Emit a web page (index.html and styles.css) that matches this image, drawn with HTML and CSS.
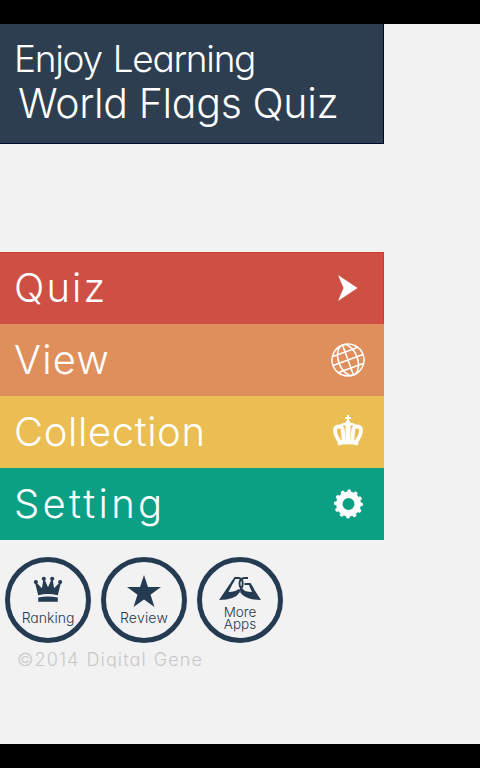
FILE: index.html
```html
<!DOCTYPE html>
<html lang="en">
<head>
<meta charset="utf-8">
<title>World Flags Quiz</title>
<link rel="stylesheet" href="styles.css">
</head>
<body>
<main class="screen">
  <header class="title">
    <div class="line line-one"><span>Enjoy</span><span class="learning">Learning</span></div>
    <div class="line line-two"><span class="world">World</span><span class="flags">Flags</span><span class="quizword">Quiz</span></div>
  </header>
  <nav class="menu">
    <a class="row red"><span class="t-quiz">Quiz</span>
      <svg class="icon" viewBox="0 0 36 36"><path fill="#fff" d="M8 5 27.500 18 8 31l5.500-13z"/></svg></a>
    <a class="row orange"><span class="t-view">View</span>
      <svg class="icon" viewBox="0 0 36 36"><g fill="none" stroke="#fff" stroke-width="1.500" transform="rotate(-20 18 18)"><circle cx="18" cy="18" r="16"/><ellipse cx="18" cy="18" rx="9.500" ry="16"/><path d="M18 2v32M2 18h32M5 9.500h26M5 26.500h26"/></g></svg></a>
    <a class="row yellow"><span class="t-coll">Collection</span>
      <svg class="icon" viewBox="0 0 36 36"><g fill="#fff"><path d="M17 1h2v2h2v2h-2v3h-2V5h-2V3h2z"/><circle cx="18" cy="8.500" r="2.200"/><path d="M8 31.500Q18 29 28 31.500L28.500 27Q18 24 7.500 27z"/></g><g fill="none" stroke="#fff"><path stroke-width="3.800" d="M9.500 27.500C6.500 23 5 20 5 16.500c0-5 6-5.500 7.500-1.500.8 3 .5 8 1.500 12M26.500 27.500C29.500 23 31 20 31 16.500c0-5-6-5.500-7.500-1.500-.8 3-.5 8-1.500 12"/><path stroke-width="5" d="M18 10v17"/><path stroke-width="2.500" d="M10 12.500q4-4 8-1.500 4-2.500 8 1.500"/></g></svg></a>
    <a class="row green"><span class="t-set">Setting</span>
      <svg class="icon" viewBox="0 0 36 36"><g fill="none" stroke="#fff" transform="translate(.5 0)"><circle cx="18" cy="18" r="9.200" stroke-width="6.400"/><circle cx="18" cy="18" r="13" stroke-width="3" stroke-linecap="round" stroke-dasharray=".8 6.007"/></g></svg></a>
  </nav>
  <div class="links">
    <a class="round">
      <svg class="badge" viewBox="0 0 32 30"><g fill="#253b52"><path d="M5.500 20.500 2.200 7.500 3.500 7l6 6L11 4h1.500L16 12l3.500-8H21l1.500 9 6-6 1.300.5-3.300 13Q16 18 5.500 20.500zM5.500 23Q16 21 26.500 23v4.500h-21z"/><circle cx="3" cy="6.500" r="2.200"/><circle cx="11.500" cy="3" r="2.200"/><circle cx="20.500" cy="3" r="2.200"/><circle cx="29" cy="6.500" r="2.200"/></g></svg>
      <span class="caption rank">Ranking</span></a>
    <a class="round">
      <svg class="star" viewBox="0 0 34 32"><path fill="#253b52" d="m17 0 4 12h13L23.500 19.700l4 12.300L17 24.500 6.500 32l4-12.300L0 12h13z"/></svg>
      <span class="caption review">Review</span></a>
    <a class="round">
      <svg class="dg" viewBox="0 0 44 26"><path fill="#253b52" d="M1 25 14.500 5l1.500 1-5.500 11q7 0 10-3l1.500 3Q17 25 1 25zM43 25 33 9.500l-2 1L34 17q-7 0-10.500-3L22 17q5 8 21 8z"/><path fill="none" stroke="#253b52" stroke-width="1.900" d="m14 8 3-5h4c5 1 5 9 0 13M30 3h-4c-6 1-6 9 0 13M26.500 9h5.500l3 5"/></svg>
      <span class="caption more"><span>More</span><span>Apps</span></span></a>
  </div>
  <footer class="copy"><span>©2014</span><span class="digital">Digital</span><span class="gene">Gene</span></footer>
</main>
</body>
</html>
```
FILE: styles.css
```css
body {
  margin: 0;
  background: #f2f2f2;
  font-family: Inter, "Liberation Sans", sans-serif;
  font-feature-settings: "cv11";
  font-weight: 300;
}
.screen {
  box-sizing: border-box;
  width: 480px;
  height: 768px;
  border-top: 24px solid #000;
  border-bottom: 24px solid #000;
  overflow: hidden;
}
.title {
  box-sizing: border-box;
  width: 384px;
  height: 120px;
  padding: 13px 0 0 14px;
  background: #2d3e50;
  border: solid #00082f;
  border-width: 0 1px 1px 0;
  color: #fff;
}
.line {
  display: flex;
  white-space: nowrap;
}
.line-one {
  font-size: 37px;
  line-height: 44px;
  letter-spacing: -1.3px;
  gap: 11px;
}
.line-two {
  font-size: 41px;
  line-height: 45px;
  padding-left: 4px;
  gap: 11px;
  letter-spacing: -0.3px;
}
.menu {
  margin-top: 108px;
  width: 384px;
}
.row {
  box-sizing: border-box;
  height: 72px;
  padding: 0 18px 2px 14px;
  display: flex;
  align-items: center;
  justify-content: space-between;
  color: #fff;
  font-size: 40px;
}
.t-quiz { letter-spacing: 2.1px; }
.t-view { letter-spacing: 1.2px; }
.t-coll { letter-spacing: 0.6px; }
.t-set { letter-spacing: 3.3px; }
.icon {
  width: 36px;
  height: 36px;
  margin-top: 2px;
}
.red { background: #ce4f44; box-shadow: inset 0 1px #d23a29, inset -1px 0 #d23a29; }
.orange { background: #df8f5c; }
.yellow { background: #eabe53; }
.green { background: #0b9f84; }
.links {
  display: flex;
  gap: 10px;
  padding: 17px 0 0 5px;
}
.round {
  box-sizing: border-box;
  width: 86px;
  height: 86px;
  border: 5px solid #253b52;
  border-radius: 50%;
  display: flex;
  flex-direction: column;
  align-items: center;
  color: #253b52;
}
.badge { width: 30px; height: 28px; margin-top: 14px; }
.star { width: 34px; height: 32px; margin-top: 13px; }
.dg { width: 44px; height: 26px; margin-top: 13px; }
.caption {
  font-size: 14px;
  line-height: 16px;
  text-align: center;
  white-space: nowrap;
}
.rank { margin-top: 6px; }
.review { margin-top: 3px; letter-spacing: 0.2px; }
.more {
  display: flex;
  flex-direction: column;
  line-height: 12px;
  margin-top: 5px;
  font-size: 13.500px;
}
.copy {
  display: flex;
  gap: 7px;
  height: 19px;
  margin-top: 6px;
  padding-left: 17px;
  overflow: hidden;
  font-size: 18px;
  line-height: 22px;
  letter-spacing: 1.1px;
  color: #c8c8c8;
}
```
